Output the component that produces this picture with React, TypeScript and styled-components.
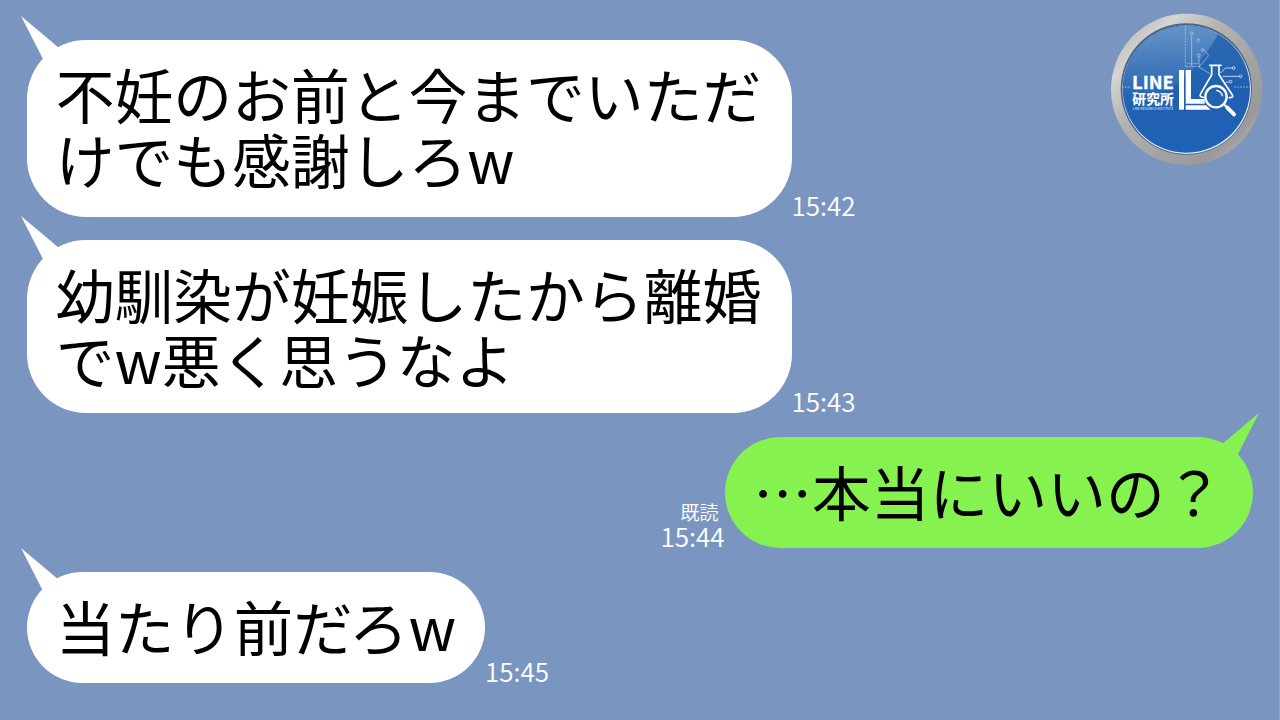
import React, { FC } from 'react';
import styled, { createGlobalStyle } from 'styled-components';

interface Message {
  id: number;
  lines: string[];
  time: string;
  mine?: boolean;
  width: number;
  height: number;
  radius: number;
  fontSize: number;
}

const MESSAGES: Message[] = [
  {
    id: 1,
    lines: ['不妊のお前と今までいただ', 'けでも感謝しろw'],
    time: '15:42',
    width: 764.5,
    height: 176.5,
    radius: 59,
    fontSize: 58.8,
  },
  {
    id: 2,
    lines: ['幼馴染が妊娠したから離婚', 'でw悪く思うなよ'],
    time: '15:43',
    width: 764.5,
    height: 173,
    radius: 59,
    fontSize: 58.8,
  },
  {
    id: 3,
    lines: ['…本当にいいの？'],
    time: '15:44',
    mine: true,
    width: 528.5,
    height: 111.5,
    radius: 56,
    fontSize: 58.8,
  },
  {
    id: 4,
    lines: ['当たり前だろw'],
    time: '15:45',
    width: 458,
    height: 111.5,
    radius: 56,
    fontSize: 59.4,
  },
];

const Logo: FC = () => (
  <LogoBadge viewBox="0 0 510 495">
    <defs>
      <linearGradient id="rim" x1="0" y1="0" x2="1" y2="1">
        <stop offset="0" stopColor="#a9a9a9" />
        <stop offset="0.22" stopColor="#d4d4d3" />
        <stop offset="0.4" stopColor="#b4b3b2" />
        <stop offset="0.62" stopColor="#a3a3a3" />
        <stop offset="0.8" stopColor="#999" />
        <stop offset="1" stopColor="#c6c6c6" />
      </linearGradient>
      <linearGradient id="face" x1="0" y1="0" x2="0" y2="1">
        <stop offset="0" stopColor="#2e6cb0" />
        <stop offset="0.5" stopColor="#1f60b1" />
        <stop offset="1" stopColor="#1f62b6" />
      </linearGradient>
      <linearGradient id="gloss" x1="0.4" y1="0" x2="0.5" y2="1">
        <stop offset="0" stopColor="#fff" stopOpacity="0.28" />
        <stop offset="1" stopColor="#fff" stopOpacity="0" />
      </linearGradient>
      <clipPath id="disc">
        <circle cx="259" cy="252" r="190" />
      </clipPath>
    </defs>
    <circle cx="260" cy="253" r="227" fill="url(#rim)" />
    <circle cx="259" cy="252" r="197" fill="#4c6585" />
    <circle cx="260" cy="254" r="193" fill="#dfeaf4" />
    <circle cx="259" cy="252" r="191" fill="url(#face)" />
    <path
      d="M60 50H372Q330 150 236 235Q150 290 60 300Z"
      fill="url(#gloss)"
      clipPath="url(#disc)"
    />
    <g fill="none" stroke="#b9d2ec" strokeWidth="2">
      <path d="M256 62V185H300M263 176H296" strokeDasharray="6 3" />
      <path d="M66 246H92M402 246H452" strokeDasharray="6 3" />
      <path d="M275 91V184M297 155V186L330 206M314 136L326 152L297 186" />
      <circle cx="275" cy="85" r="4" />
      <circle cx="295" cy="106" r="4" />
      <circle cx="308" cy="135" r="4" />
      <circle cx="296" cy="151" r="4" />
    </g>
    <g fill="none" stroke="#dceafa" strokeWidth="2.5">
      <path d="M362 204L376 189H396M368 214H417M372 240L380 231H387" />
      <circle cx="401" cy="189" r="4" />
      <circle cx="422" cy="214" r="4" />
      <circle cx="392" cy="230" r="4" />
    </g>
    <g fill="#fff">
      <path d="M237 195H252V314H237Z" />
      <path d="M257 195H273V282H314V296H257Z" />
      <path d="M257 301H318L332 314H257Z" />
    </g>
    <path
      d="M329 181H363M335 183V209L301 268Q298 276 310 277M357 183V209L397 270Q402 277 388 278"
      fill="none"
      stroke="#fff"
      strokeWidth="5"
      strokeLinecap="round"
    />
    <circle cx="348" cy="275" r="32" fill="#2263b1" stroke="#fff" strokeWidth="7" />
    <path
      d="M350 256Q364 259 367 272"
      fill="none"
      stroke="#fff"
      strokeWidth="4"
      strokeLinecap="round"
    />
    <path d="M373 299L384 309" stroke="#fff" strokeWidth="6" />
    <path d="M382 308L402 328" stroke="#fff" strokeWidth="12" strokeLinecap="round" />
    <LogoText
      x="96"
      y="252"
      fontSize="53"
      textLength="126"
      lengthAdjust="spacingAndGlyphs"
      $stroke={1}
    >
      LINE
    </LogoText>
    <LogoText x="97" y="297" fontSize="41" textLength="124" $stroke={0.5}>
      研究所
    </LogoText>
    <LogoText x="98" y="314" fontSize="9" textLength="122" $thin>
      LINE RESEARCH INSTITUTE
    </LogoText>
  </LogoBadge>
);

const App = () => (
  <>
    <GlobalStyle />
    <ChatRoom>
      {MESSAGES.map(
        ({ id, lines, time, mine, width, height, radius, fontSize }) => {
          return (
            <Row key={id} $mine={mine}>
              <Bubble
                $mine={mine}
                $width={width}
                $height={height}
                $radius={radius}
              >
                <Tail viewBox="0 0 40 50" $mine={mine}>
                  <path d="M0 0L38 32L34 50H24L22 43Z" />
                </Tail>
                {lines.map((line) => (
                  <Line key={line} $size={fontSize}>
                    {line}
                  </Line>
                ))}
              </Bubble>
              <Meta>
                {mine && <Read>既読</Read>}
                <Time>{time}</Time>
              </Meta>
            </Row>
          );
        },
      )}
      <Logo />
    </ChatRoom>
  </>
);

const GlobalStyle = createGlobalStyle`
  body {
    margin: 0;
    font-family: 'Noto Sans CJK JP', sans-serif;
  }
`;

const ChatRoom = styled.main`
  position: relative;
  display: flex;
  flex-direction: column;
  gap: 23.5px;
  box-sizing: border-box;
  width: 1280px;
  height: 720px;
  padding: 40px 26px 0 27px;
  overflow: hidden;
  border-right: 1px solid #94a9cc;
  background: #7a96c0;
`;

const Row = styled.div<{ $mine?: boolean }>`
  display: flex;
  flex-direction: ${({ $mine }) => ($mine ? 'row-reverse' : 'row')};
  align-items: flex-end;
`;

const Bubble = styled.div<{
  $mine?: boolean;
  $width: number;
  $height: number;
  $radius: number;
}>`
  position: relative;
  flex-shrink: 0;
  box-sizing: border-box;
  width: ${({ $width }) => $width}px;
  height: ${({ $height }) => $height}px;
  padding: 21px 0 0 28.7px;
  border-radius: ${({ $radius }) => $radius}px;
  background: ${({ $mine }) => ($mine ? '#86f250' : '#fff')};
  color: ${({ $mine }) => ($mine ? '#86f250' : '#fff')};
`;

const Tail = styled.svg<{ $mine?: boolean }>`
  position: absolute;
  top: -24px;
  ${({ $mine }) => ($mine ? 'right: -6px;' : 'left: -6px;')}
  width: 40px;
  height: 50px;
  fill: currentColor;
  transform: ${({ $mine }) => ($mine ? 'scaleX(-1)' : 'none')};
`;

const Line = styled.p<{ $size: number }>`
  margin: 0;
  font-size: ${({ $size }) => $size}px;
  line-height: 65px;
  white-space: nowrap;
  color: #000;
`;

const Meta = styled.div`
  display: flex;
  flex-direction: column;
  align-items: flex-end;
  font-weight: 350;
  color: #fff;
`;

const Read = styled.span`
  margin-right: 6px;
  font-size: 19px;
  line-height: 25px;
`;

const Time = styled.span`
  font-size: 26px;
  line-height: 24px;
`;

const LogoBadge = styled.svg`
  position: absolute;
  top: 5px;
  right: 9px;
  width: 170px;
  height: 165px;
`;

const LogoText = styled.text<{ $thin?: boolean; $stroke?: number }>`
  fill: #fff;
  stroke: #fff;
  stroke-width: ${({ $stroke = 0 }) => $stroke};
  font-weight: ${({ $thin }) => ($thin ? 400 : 700)};
`;

export default App;
